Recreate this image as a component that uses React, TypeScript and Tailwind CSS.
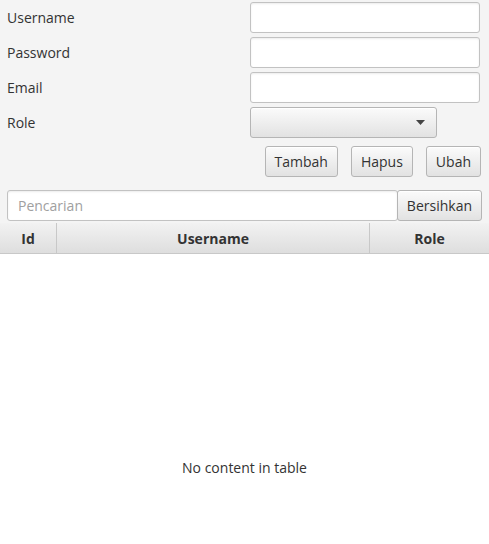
export default function App() {
  const field =
    "h-[31px] w-[230px] rounded-[3px] border border-[#c2c2c2] bg-white shadow-[inset_0_1px_2px_rgba(0,0,0,0.08)]";
  const btn =
    "h-[31px] rounded-[3px] border border-[#b5b5b5] bg-gradient-to-b from-[#fbfbfb] to-[#e2e2e2] px-[9px] text-[14px] text-[#333] shadow-[inset_0_1px_0_#fff]";
  const labels = ["Username", "Password", "Email"];

  return (
    <div
      className="h-[544px] w-[489px] overflow-hidden bg-[#f4f4f4] text-[#333]"
      style={{ fontFamily: '"Open Sans", "Noto Sans", sans-serif' }}
    >
      <div className="flex flex-col gap-[4px] pt-[2px]">
        {labels.map((l) => (
          <div key={l} className="flex items-center">
            <span className="w-[250px] pl-[7px] text-[14px]">{l}</span>
            <div className={field} />
          </div>
        ))}
        <div className="flex items-center">
          <span className="w-[250px] pl-[7px] text-[14px]">Role</span>
          <div className="flex h-[31px] w-[187px] items-center justify-end rounded-[3px] border border-[#b5b5b5] bg-gradient-to-b from-[#fbfbfb] to-[#e2e2e2] pr-[11px] shadow-[inset_0_1px_0_#fff]">
            <svg width="9" height="5" viewBox="0 0 9 5">
              <path d="M0 0 L9 0 L4.5 5 Z" fill="#444" />
            </svg>
          </div>
        </div>
      </div>

      <div className="mt-[8px] flex justify-end gap-[13px] pr-[8px]">
        <button className={btn}>Tambah</button>
        <button className={btn}>Hapus</button>
        <button className={btn}>Ubah</button>
      </div>

      <div className="mt-[13px] flex pl-[7px] pr-[7px]">
        <div className="flex h-[31px] flex-1 items-center rounded-[3px] border border-[#c2c2c2] bg-white pl-[10px] text-[14px] text-[#a0a0a0] shadow-[inset_0_1px_2px_rgba(0,0,0,0.08)]">
          Pencarian
        </div>
        <button className={btn + " -ml-[1px]"}>Bersihkan</button>
      </div>

      <div className="mt-[2px] flex h-[31px] border-b border-[#c8c8c8] bg-gradient-to-b from-[#f2f2f2] to-[#dedede] text-[14px] font-bold text-[#333]">
        <div className="flex w-[57px] items-center justify-center border-r border-[#c8c8c8]">Id</div>
        <div className="flex w-[313px] items-center justify-center border-r border-[#c8c8c8]">Username</div>
        <div className="flex flex-1 items-center justify-center">Role</div>
      </div>

      <div className="flex h-[400px] justify-center bg-white pt-[203px] text-[14px] text-[#333]">
        No content in table
      </div>
    </div>
  );
}
